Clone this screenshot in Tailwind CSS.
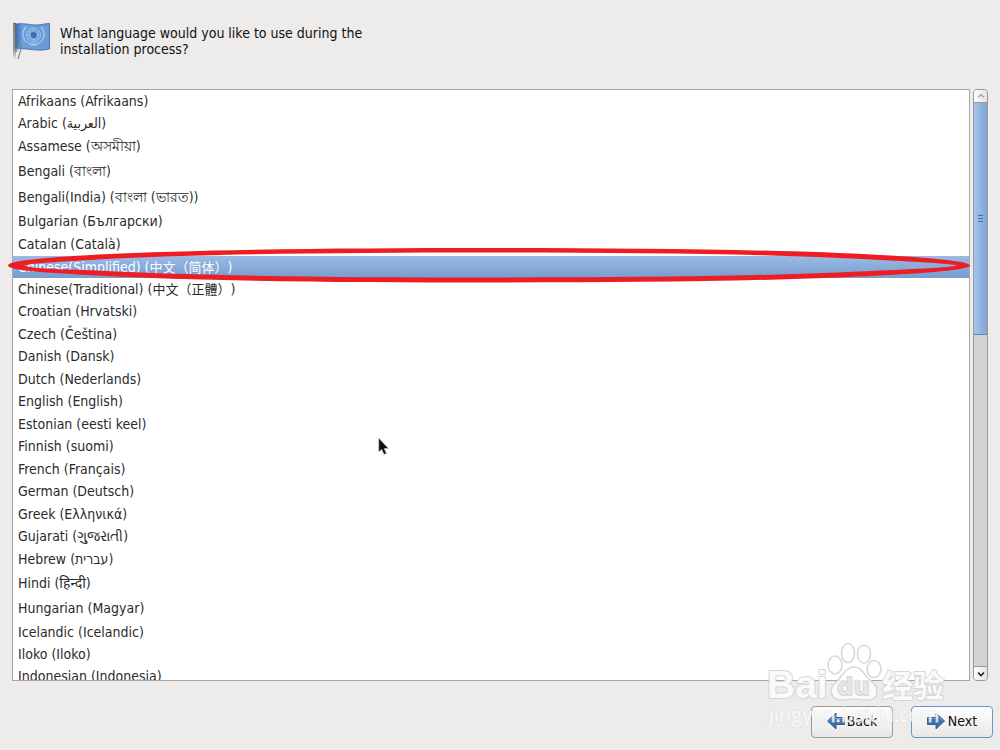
<!DOCTYPE html>
<html lang="en">
<head>
<meta charset="utf-8">
<meta name="viewport" content="width=device-width, initial-scale=1">
<title>Installation language</title>
<script src="https://cdn.jsdelivr.net/npm/@tailwindcss/browser@4"></script>
</head>
<body class="relative flex h-screen flex-col overflow-hidden bg-[#edeceb] font-['DejaVu_Sans_Condensed','DejaVu_Sans','Noto_Sans','Noto_Sans_CJK_SC',sans-serif] text-[14px] text-[#2b2b2b]">
<header class="flex h-[89px] shrink-0 items-start px-3 pt-[22px]">
  <svg class="h-10 w-10 shrink-0" viewBox="0 0 40 40" aria-hidden="true">
    <defs>
      <linearGradient id="flag" x1="0" x2="1" y1="0" y2="0"><stop offset="0" stop-color="#3f72b4"/><stop offset=".2" stop-color="#6c9fdc"/><stop offset=".65" stop-color="#6a9cd8"/><stop offset="1" stop-color="#6a9cd8"/></linearGradient>
      <linearGradient id="pole" x1="0" x2="0" y1="0" y2="1"><stop offset="0" stop-color="#60645f"/><stop offset=".7" stop-color="#777b75"/><stop offset="1" stop-color="#777b75" stop-opacity="0"/></linearGradient>
    </defs>
    <path d="M1 1h3v36H1z" fill="url(#pole)"/>
    <path d="M2 2v32" stroke="#b8bab5" stroke-width=".8"/>
    <path d="M4 2c9-1 14 1 20 1s9-1.500 13.500-1.500v25.500c-5 1-9 1.500-15 .8S10 26.500 4 26.500z" fill="url(#flag)" stroke="#3c6eae" stroke-width=".9"/>
    <g fill="none" stroke="#a9c9ee" stroke-width=".9">
      <circle cx="21.500" cy="13" r="7"/><circle cx="21.500" cy="13" r="4.500"/><path d="M14.500 13h14M21.500 6v14M16.500 8l10 10M26.500 8l-10 10" stroke-width=".5"/>
      <path d="M14 5c-5 5-4 14 4 17l7 1M29 5c5 5 4 14-4 17l-7 1" stroke-width="1.300"/>
    </g>
    <path d="M19 10.500l4-1 2 3-1 3-3 1-2-2z" fill="#3b73b8"/>
    <path d="M9 21l1 3-4 13M8 22l-4 8" fill="none" stroke="#858b8f" stroke-width="1.200"/>
  </svg>
  <h1 class="ml-2 mt-[3px] max-w-[320px] leading-4 text-[#111]">What language would you like to use during the installation process?</h1>
</header>

<main class="flex min-h-0 flex-1 gap-[3px] px-3">
  <div class="relative min-w-0 flex-1">
    <div id="languages" role="listbox" aria-label="Installation language" class="flex h-full flex-col overflow-hidden border border-[#a8a7a5] bg-white [text-spacing-trim:space-all] *:block *:w-full *:shrink-0 *:pl-[5px] *:text-left *:whitespace-pre">
      <button role="option" class="h-[22px]">Afrikaans (Afrikaans)</button>
      <button role="option" class="h-[22px]">Arabic (العربية)</button>
      <button role="option" class="h-[25px]">Assamese (অসমীয়া)</button>
      <button role="option" class="h-[25px]">Bengali (বাংলা)</button>
      <button role="option" class="h-[26px]">Bengali(India) (বাংলা (ভারত))</button>
      <button role="option" class="h-[23px]">Bulgarian (Български)</button>
      <button role="option" class="h-[23px]">Catalan (Català)</button>
      <button role="option" aria-selected="true" class="h-[22px] bg-linear-to-b from-[#9cbae4] to-[#769dcf] text-white">Chinese(Simplified) (<span class="text-[13px]">中文（简体）</span>)</button>
      <button role="option" class="h-[22px]">Chinese(Traditional) (<span class="text-[13px]">中文（正體）</span>)</button>
      <button role="option" class="h-[23px]">Croatian (Hrvatski)</button>
      <button role="option" class="h-[22px]">Czech (Čeština)</button>
      <button role="option" class="h-[23px]">Danish (Dansk)</button>
      <button role="option" class="h-[22px]">Dutch (Nederlands)</button>
      <button role="option" class="h-[23px]">English (English)</button>
      <button role="option" class="h-[22px]">Estonian (eesti keel)</button>
      <button role="option" class="h-[23px]">Finnish (suomi)</button>
      <button role="option" class="h-[22px]">French (Français)</button>
      <button role="option" class="h-[23px]">German (Deutsch)</button>
      <button role="option" class="h-[22px]">Greek (Ελληνικά)</button>
      <button role="option" class="h-[23px]">Gujarati (ગુજરાતી)</button>
      <button role="option" class="h-[23px]">Hebrew (עברית)</button>
      <button role="option" class="h-[25px]">Hindi (हिन्दी)</button>
      <button role="option" class="h-[25px]">Hungarian (Magyar)</button>
      <button role="option" class="h-[22px]">Icelandic (Icelandic)</button>
      <button role="option" class="h-[22px]">Iloko (Iloko)</button>
      <button role="option" class="h-[23px]">Indonesian (Indonesia)</button>
    </div>
    <!-- Red highlight ring round the selected language -->
    <svg class="pointer-events-none absolute top-[158px] -left-1 h-9 w-[calc(100%+4px)]" viewBox="0 0 962 36" preserveAspectRatio="none" aria-hidden="true">
      <path fill="#ee1c23" fill-rule="evenodd" d="M0 18.500C0 14 30 11 90 7.500C190 2.500 330 1 481 1S772 2.500 872 8C932 11 962 15 962 18.500S932 25.500 872 28.500C772 34 632 35.500 481 35.500S190 34 90 28.500C30 25.500 0 23 0 18.500ZM16 18.500C25 22 50 22 90 23.500C190 29 330 30.500 481 30.500S772 29 872 23.500C912 22 940 20.500 950 18.500C940 16.500 912 15 872 13C772 7 632 5.500 481 5.500S190 7 90 12.500C50 15 25 16 16 18.500Z"/>
    </svg>
  </div>
  <div class="flex w-[15px] shrink-0 flex-col overflow-hidden rounded-[4px] border border-[#9a9996] bg-[#d5d4d2]" role="scrollbar" aria-label="Languages" aria-controls="languages" aria-valuenow="0">
    <button aria-label="Scroll up" class="flex h-[13px] shrink-0 items-center justify-center border-b border-[#9a9996] bg-linear-to-r from-white to-[#e6e5e3]"><svg class="h-2 w-2" viewBox="0 0 8 8"><path d="M1 5.500l3-3 3 3" fill="none" stroke="#aaa9a6" stroke-width="1.500"/></svg></button>
    <div class="-mx-px flex h-[232px] shrink-0 flex-col items-center justify-center gap-[2px] border border-t-0 border-[#5e84b5] bg-linear-to-r from-[#a6c4ec] to-[#7da5d8]">
      <span class="h-px w-[5px] bg-[#416ca3]"></span><span class="h-px w-[5px] bg-[#416ca3]"></span><span class="h-px w-[5px] bg-[#416ca3]"></span>
    </div>
    <div class="flex-1"></div>
    <button aria-label="Scroll down" class="flex h-[14px] shrink-0 items-center justify-center border-t border-[#9a9996] bg-linear-to-r from-white to-[#e6e5e3]"><svg class="h-2 w-2" viewBox="0 0 8 8"><path d="M1 2.500l3 3 3-3" fill="none" stroke="#222" stroke-width="1.600"/></svg></button>
  </div>
</main>

<footer class="flex h-[69px] shrink-0 justify-end gap-[18px] pt-[25px] pr-[7px] text-[#111]">
  <button class="flex h-8 w-[82px] items-center justify-center gap-[2px] rounded-[4px] border border-[#9a9994] bg-linear-to-b from-white to-[#e8e7e6] pb-[2px]">
    <svg class="h-[18px] w-[18px]" viewBox="0 0 18 18" aria-hidden="true"><path d="M.500 9L9 1v4.500h8.500v7H9V17z" fill="#3c70b2" stroke="#204a87" stroke-width=".8"/><path d="M2 9l6-5.500v3h8.500" fill="none" stroke="#729fcf"/></svg>
    <span>Back</span>
  </button>
  <button class="flex h-8 w-[82px] items-center justify-center gap-[3px] rounded-[4px] border border-[#6b93c8] bg-linear-to-b from-white to-[#e8e7e6] pb-[2px]">
    <svg class="h-[18px] w-[18px]" viewBox="0 0 18 18" aria-hidden="true"><path d="M17.500 9L9 1v4.500H.500v7H9V17z" fill="#3c70b2" stroke="#204a87" stroke-width=".8"/><path d="M16 9l-6-5.500v3H1.500" fill="none" stroke="#729fcf"/></svg>
    <span>Next</span>
  </button>
</footer>

<!-- Mouse pointer -->
<svg class="pointer-events-none absolute top-[437px] left-[378px] h-[19px] w-[12px]" viewBox="0 0 12 19" aria-hidden="true"><path d="M.700 1v14l3-2.500 2.300 5 2.500-1-2.200-5H10.500z" fill="#111" stroke="#ccc" stroke-width=".7"/></svg>

<!-- Watermark over the lower right corner -->
<svg class="pointer-events-none absolute right-[50px] bottom-[18px] h-[92px] w-[190px]" viewBox="0 0 190 92" aria-label="Baidu watermark">
  <g fill="#fff" fill-opacity=".75" stroke="#d9d9d9" stroke-width="1.600">
    <ellipse cx="75" cy="25" rx="7" ry="9"/><ellipse cx="88" cy="13" rx="6.500" ry="9.500"/><ellipse cx="104" cy="14" rx="6.500" ry="9"/><ellipse cx="114" cy="29" rx="7" ry="8.500"/>
    <path d="M94 27c7 0 10 7 15 12s8 7 8 12c0 6-4 9-9 9-6 0-9-1-14-1s-8 1-14 1c-5 0-9-4-9-9 0-5 4-7 8-12s8-12 15-12z"/>
  </g>
  <g fill="#fafafa" stroke="#d6d6d6" stroke-width="2" stroke-linejoin="round" paint-order="stroke" font-weight="700">
    <text x="7" y="58" font-size="39" font-family="Liberation Sans, sans-serif">Bai</text>
    <text x="122" y="57" font-size="31" font-family="Noto Sans CJK SC, sans-serif">经验</text>
  </g>
  <text x="77" y="55" font-size="23" font-weight="700" font-family="DejaVu Sans, sans-serif" fill="#e6e6e6" stroke="#d0d0d0" stroke-width="1.500" paint-order="stroke">du</text>
  <text x="9" y="82" font-size="20" font-family="Open Sans, sans-serif" fill="#fff" fill-opacity=".8" stroke="#dcdcdc" stroke-opacity=".5" stroke-width="1.600" paint-order="stroke">jingyan.baidu.com</text>
</svg>
</body>
</html>
